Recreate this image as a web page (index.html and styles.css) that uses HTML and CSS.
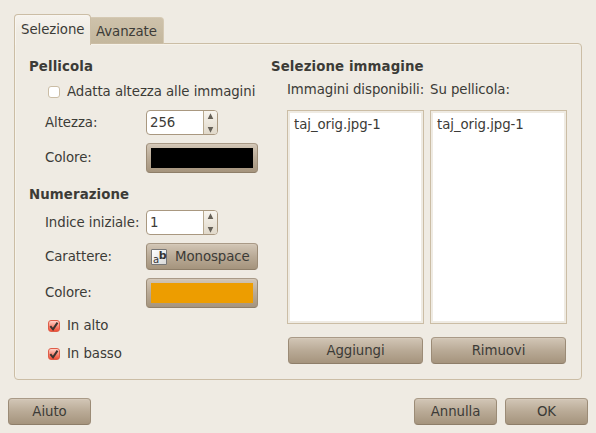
FILE: index.html
```html
<!DOCTYPE html>
<html lang="it">
<head>
<meta charset="utf-8">
<title>Pellicola</title>
<link rel="stylesheet" href="styles.css">
</head>
<body>
<main class="dialog">
  <nav class="tabs">
    <div class="tab active">Selezione</div>
    <div class="tab idle">Avanzate</div>
  </nav>
  <section class="panel">
    <div class="settings">
      <h2>Pellicola</h2>
      <label class="check-row first"><span class="check"></span>Adatta altezza alle immagini</label>
      <div class="row spin-row"><span>Altezza:</span>
        <div class="spin"><span class="value">256</span><span class="steps"><svg width="13" height="23" viewBox="0 0 13 23"><path d="M6.5 2.3 9.3 8H3.7zM6.5 21.7 9.3 16H3.7z"/></svg></span></div></div>
      <div class="row color-row"><span>Colore:</span><div class="button color"><i class="swatch black"></i></div></div>
      <h2 class="second">Numerazione</h2>
      <div class="row spin-row"><span>Indice iniziale:</span>
        <div class="spin"><span class="value">1</span><span class="steps"><svg width="13" height="23" viewBox="0 0 13 23"><path d="M6.5 2.3 9.3 8H3.7zM6.5 21.7 9.3 16H3.7z"/></svg></span></div></div>
      <div class="row font-row"><span>Carattere:</span><div class="button font"><span class="font-icon"><span class="a">a</span><b>b</b></span><span class="font-name">Monospace</span></div></div>
      <div class="row color-row"><span>Colore:</span><div class="button color"><i class="swatch orange"></i></div></div>
      <label class="check-row"><span class="check on"><svg width="12" height="12" viewBox="0 0 12 12"><path d="M2.3 6.2 5 9.3 9.5 2.6"/></svg></span>In alto</label>
      <label class="check-row"><span class="check on"><svg width="12" height="12" viewBox="0 0 12 12"><path d="M2.3 6.2 5 9.3 9.5 2.6"/></svg></span>In basso</label>
    </div>
    <div class="images">
      <h2>Selezione immagine</h2>
      <div class="lists">
        <div class="column"><span class="caption">Immagini disponibili:</span><div class="list">taj_orig.jpg-1</div><div class="button">Aggiungi</div></div>
        <div class="column"><span class="caption">Su pellicola:</span><div class="list">taj_orig.jpg-1</div><div class="button">Rimuovi</div></div>
      </div>
    </div>
  </section>
  <footer class="actions">
    <div class="button">Aiuto</div>
    <div class="button push">Annulla</div>
    <div class="button ok">OK</div>
  </footer>
</main>
</body>
</html>
```
FILE: styles.css
```css
* { box-sizing: border-box; }
body {
  margin: 0;
  background: #efebe3;
  color: #3c3b37;
  font: 13.333px/18px "DejaVu Sans", sans-serif;
  letter-spacing: -0.07px;
  white-space: nowrap;
}
.dialog { width: 596px; height: 433px; padding: 14px 8px 8px; overflow: hidden; }
.tabs { display: flex; align-items: flex-end; height: 30px; margin-left: 6px; position: relative; }
.tab { border: 1px solid #cbbda5; }
.active {
  width: 77px; height: 31px; margin-bottom: -1px; padding: 6px 0 0 6px;
  border-bottom: 0; border-radius: 4px 4px 0 0;
  background: linear-gradient(#f6f3ee, #efebe3 60%);
  box-shadow: inset 1px 1px #f8f5f0;
}
.idle {
  width: 73px; height: 27px; padding: 5px 0 0 5px;
  border-left: 0; border-radius: 0 4px 0 0;
  border-color: #d5c9b3 #d5c9b3 #cbbda5;
  background: linear-gradient(#cec2ab, #c4b79d);
}
.panel {
  display: flex;
  width: 568px; height: 337px; margin: -1px 0 18px 6px; padding: 14px 0 0 14px;
  border: 1px solid #cbbda5; border-radius: 0 4px 4px 4px;
  box-shadow: inset 1px 1px #f6f2e9;
}
h2 { height: 16px; margin: 0; font-size: 13.333px; line-height: 18px; font-weight: bold; letter-spacing: 0.1px; }
.settings { width: 242px; }
.check-row { display: flex; align-items: center; gap: 7px; height: 28px; margin-left: 19px; padding-top: 2px; }
.check-row.first { height: 18px; margin: 8px 0 10px 19px; }
.check {
  width: 12px; height: 12px;
  background: #fff; border: 1px solid #cbbda5; border-radius: 3px;
}
.check.on { border-color: #df5d48; background: linear-gradient(#ffd2c8, #f77a65 65%, #f04e36); }
.check svg { display: block; margin: -1px; fill: none; stroke: #3c3430; stroke-width: 2; }
.row { display: grid; grid-template-columns: 101px 112px; align-items: center; margin-left: 16px; }
.row > span { padding-top: 1px; }
.row.color-row > span { padding: 0 0 1px; }
.spin-row { height: 25px; margin-bottom: 8px; }
.spin {
  display: flex; width: 72px; height: 25px;
  background: #fff; border: 1px solid #a99880; border-radius: 4px; overflow: hidden;
}
.value { flex: 1; padding: 3px 0 0 3px; }
.steps { width: 14px; border-left: 1px solid #b9aa90; background: linear-gradient(#f8f5ef, #e1d9ca); }
.steps svg { display: block; fill: #666158; }
.button {
  display: flex; align-items: center; justify-content: center;
  height: 27px; padding-top: 1px;
  border: 1px solid #9d8c77; border-color: #a99a87 #9b8b76 #8e7e69; border-radius: 4px;
  background: linear-gradient(#d2c6b6, #b9aa96 50%, #a5947d);
  box-shadow: inset 0 1px #d5c9b9;
}
.color { height: 30px; padding: 4px; }
.swatch { width: 102px; height: 20px; }
.black { background: #000; }
.orange { background: #ed9d00; }
.second { margin: 13px 0 8px; }
.font-row { margin-bottom: 8px; }
.font { justify-content: flex-start; padding: 0 0 0 4px; gap: 8px; }
.font-name { padding-top: 1px; }
.font-icon {
  display: flex; width: 16px; height: 16px;
  border: 1px solid #777; border-radius: 1px;
  background: linear-gradient(135deg, #fff, #d9d9d9);
  color: #333; font-size: 10px; line-height: 9px; letter-spacing: -0.5px;
}
.font-icon .a { margin: 5px 0 0 1px; }
.font-icon b { margin-top: 1px; font-size: 11px; }
.row + .check-row { margin-top: 3px; }
.lists { display: grid; grid-template-columns: 137px 137px; gap: 6px; margin-left: 16px; }
.column { display: flex; flex-direction: column; }
.caption { margin-top: 7px; height: 29px; }
.list {
  height: 214px; padding: 5px 0 0 6px;
  background: #fff; border: 1px solid #cbbda5;
  outline: 2px solid #efebe3; outline-offset: -3px;
}
.column .button { width: 135px; margin: 13px 1px 0; }
.actions { display: flex; }
.actions .button { width: 83px; }
.push { margin-left: auto; }
.ok { margin-left: 8px; }
```
